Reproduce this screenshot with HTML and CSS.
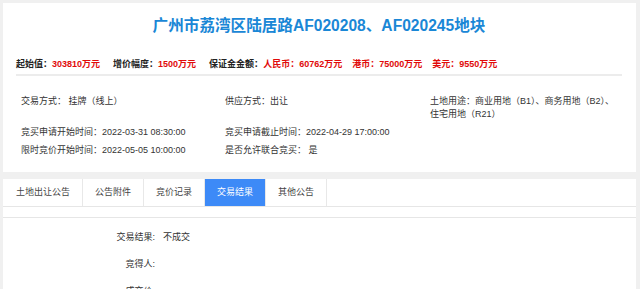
FILE: index.html
```html
<!DOCTYPE html>
<html lang="zh-CN">

<head>
    <meta charset="UTF-8">
    <meta name="viewport" content="width=device-width, initial-scale=1.0">
    <link rel="stylesheet" href="styles.css">
    <title>地块详情</title>
</head>

<body>
    <div class="infoCard">
        <h1 class="landTitle">广州市荔湾区陆居路AF020208、AF020245地块</h1>
        <div class="priceLine">
            <span class="priceItem">起始值：<em>303810万元</em></span>
            <span class="priceItem">增价幅度：<em>1500万元</em></span>
            <span class="priceItem">保证金金额：<em>人民币：60762万元</em><em>港币：75000万元</em><em>美元：9550万元</em></span>
        </div>
        <div class="detailGrid">
            <div>交易方式： 挂牌（线上）</div>
            <div>供应方式：出让</div>
            <div>土地用途：商业用地（B1）、商务用地（B2）、<br>住宅用地（R21）</div>
            <div>竞买申请开始时间：2022-03-31 08:30:00</div>
            <div>竞买申请截止时间：2022-04-29 17:00:00</div>
            <div></div>
            <div>限时竞价开始时间：2022-05-05 10:00:00</div>
            <div>是否允许联合竞买： 是</div>
            <div></div>
        </div>
    </div>

    <div class="tabBox">
        <ul class="tabBar">
            <li>土地出让公告</li>
            <li>公告附件</li>
            <li>竞价记录</li>
            <li class="active">交易结果</li>
            <li>其他公告</li>
        </ul>
        <div class="tabGap"></div>
        <div class="resultPanel">
            <div class="resultRow"><span class="resultLabel">交易结果:</span><span>不成交</span></div>
            <div class="resultRow"><span class="resultLabel">竞得人:</span><span></span></div>
            <div class="resultRow"><span class="resultLabel">成交价:</span><span></span></div>
        </div>
    </div>
</body>

</html>
```

FILE: styles.css
```css
body {
    background-color: #f0f0f0;
    margin: 3px 4px 0 3px;
    font-family: "Liberation Sans", "Noto Sans CJK SC", sans-serif;
    font-size: 9px;
    color: #333;
}

.infoCard {
    background-color: #fff;
    padding: 11px 14px 15px 13px;
}

.landTitle {
    margin: 0;
    text-align: center;
    font-size: 15.6px;
    line-height: 24px;
    color: #1a87d6;
    font-weight: bold;
}

.priceLine {
    display: flex;
    margin-top: 20px;
    padding-bottom: 3px;
    border-bottom: 2px solid #ececec;
    line-height: 13px;
    font-weight: bold;
    color: #222;
    white-space: nowrap;
}

.priceItem {
    margin-right: 13px;
}

.priceItem em {
    font-style: normal;
    color: #e10a0a;
}

.priceItem em + em {
    margin-left: 10px;
}

.detailGrid {
    display: grid;
    grid-template-columns: 204px 205px 1fr;
    row-gap: 5px;
    margin-top: 19px;
    padding-left: 5px;
    line-height: 13px;
}

.tabBox {
    margin-top: 7px;
    background-color: #fff;
}

.tabBar {
    display: flex;
    margin: 0;
    padding: 0;
    list-style: none;
    height: 27px;
    border-bottom: 1px solid #e6e6e6;
}

.tabBar li {
    padding: 0 12px;
    line-height: 27px;
    border-right: 1px solid #e8e8e8;
    color: #444;
}

.tabBar li:first-child {
    padding: 0 12px 0 13px;
}

.tabBar li.active {
    background-color: #3d8af7;
    color: #fff;
}

.tabGap {
    height: 10px;
    border-bottom: 1px solid #e6e6e6;
}

.resultPanel {
    padding-top: 6px;
    height: 80px;
}

.resultRow {
    display: flex;
    line-height: 27px;
}

.resultLabel {
    width: 152px;
    text-align: right;
    margin-right: 8px;
}
```
